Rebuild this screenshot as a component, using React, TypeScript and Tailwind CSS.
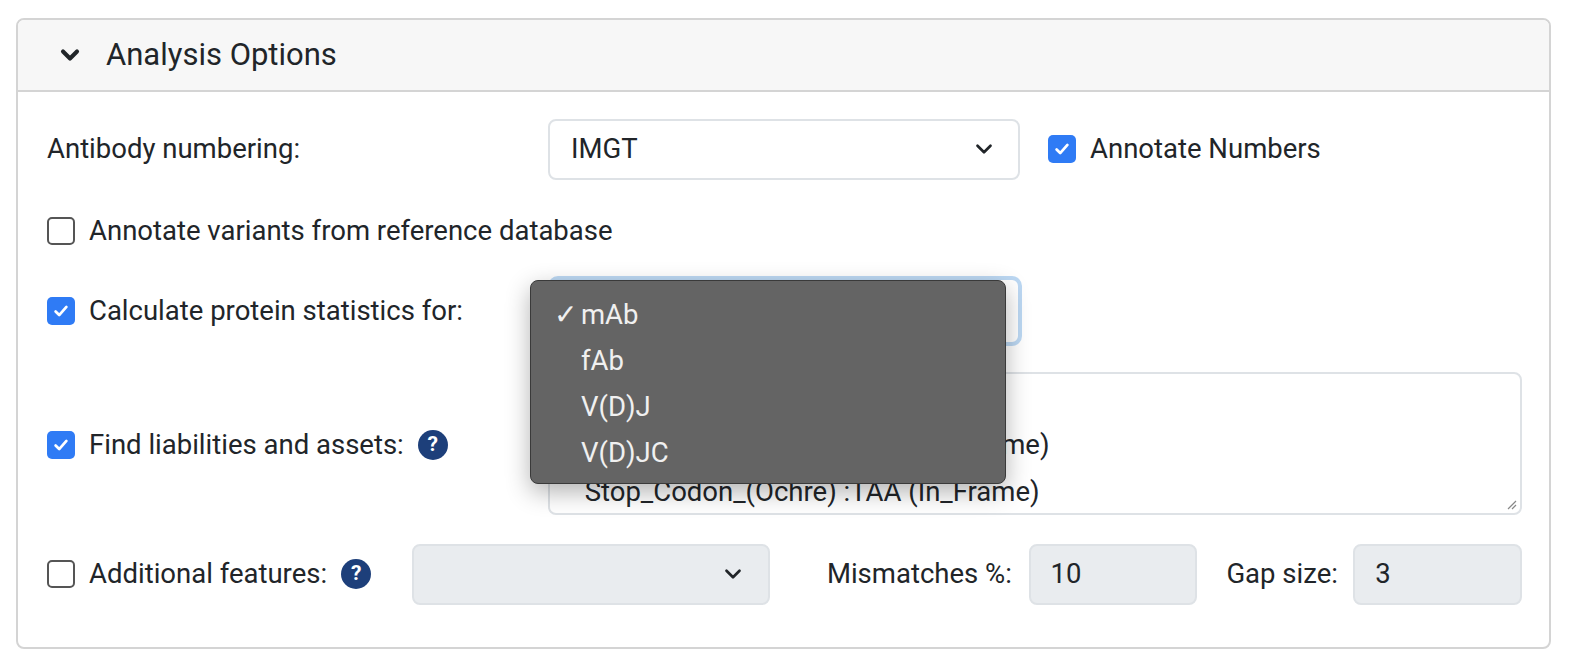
import { ChevronDown } from 'lucide-react';

const Check = ({ checked }: { checked: boolean }) =>
  checked ? (
    <span className="w-[28px] h-[28px] rounded-[5px] bg-[#2f7bf5] flex items-center justify-center shrink-0">
      <svg width="18" height="18" viewBox="0 0 20 20">
        <path d="M4 10.5l4 4 8-9" fill="none" stroke="white" strokeWidth="3" strokeLinecap="round" strokeLinejoin="round" />
      </svg>
    </span>
  ) : (
    <span className="w-[28px] h-[28px] rounded-[5px] border-2 border-[#555] bg-white shrink-0" />
  );

const Help = () => (
  <span className="w-[30px] h-[30px] rounded-full bg-[#1d3f7a] text-white text-[21px] font-bold flex items-center justify-center shrink-0">?</span>
);

export default function App() {
  return (
    <div className="w-[1572px] h-[668px] bg-white pt-[18px] pl-[16px] text-[#212529] text-[27.5px]" style={{ fontFamily: 'Roboto, "Liberation Sans", sans-serif' }}>
      <div className="w-[1535px] h-[631px] border-2 border-[#d4d4d4] rounded-[8px] overflow-hidden">
        <div className="h-[72px] bg-[#f7f7f7] border-b-2 border-[#d4d4d4] flex items-center pl-[38px] gap-[22px]">
          <ChevronDown size={28} strokeWidth={3.5} />
          <span className="text-[31px]">Analysis Options</span>
        </div>
        <div className="relative pl-[29px] pr-[27px]">
          {/* row 1 */}
          <div className="h-[114px] flex items-center">
            <span className="w-[501px]">Antibody numbering:</span>
            <div className="w-[472px] h-[61px] border-2 border-[#dee2e6] rounded-[8px] flex items-center justify-between px-[21px]">
              <span>IMGT</span>
              <ChevronDown size={26} strokeWidth={2.5} />
            </div>
            <span className="ml-[28px] mr-[14px]"><Check checked /></span>
            <span>Annotate Numbers</span>
          </div>
          {/* row 2 */}
          <div className="h-[50px] flex items-center gap-[14px]">
            <Check checked={false} />
            <span>Annotate variants from reference database</span>
          </div>
          {/* row 3 */}
          <div className="h-[110px] flex items-center">
            <span className="w-[501px] flex items-center gap-[14px]"><Check checked /><span>Calculate protein statistics for:</span></span>
            <div className="w-[474px] h-[70px] rounded-[10px] border-[4px] border-[#bcd8f3] bg-white" />
          </div>
          {/* row 4 */}
          <div className="h-[155px] flex items-start pt-[6px]">
            <span className="w-[501px] flex items-center gap-[14px] mt-[52px]"><Check checked /><span>Find liabilities and assets:</span><Help /></span>
            <div className="w-[975px] h-[143px] border-2 border-[#dee2e6] rounded-[8px] pl-[35px] pt-[0px] leading-[47px] relative">
              <div>N_Glycosylation</div>
              <div>Stop_Codon_(Amber) :TAG (In_Frame)</div>
              <div className="h-[40px] overflow-hidden">Stop_Codon_(Ochre) :TAA (In_Frame)</div>
              <svg className="absolute right-[3px] bottom-[3px]" width="12" height="12" viewBox="0 0 12 12">
                <path d="M11 3L3 11M11 7L7 11" stroke="#888" strokeWidth="1.2" />
              </svg>
            </div>
          </div>
          {/* row 5 */}
          <div className="h-[106px] flex items-center">
            <span className="w-[366px] flex items-center gap-[14px]"><Check checked={false} /><span>Additional features:</span><Help /></span>
            <div className="w-[358px] h-[61px] border-2 border-[#dee2e6] bg-[#e9ecef] rounded-[8px] flex items-center justify-end px-[22px]">
              <ChevronDown size={26} strokeWidth={2.5} />
            </div>
            <span className="ml-[57px] w-[202px]">Mismatches %:</span>
            <div className="w-[169px] h-[61px] border-2 border-[#dee2e6] bg-[#e9ecef] rounded-[8px] flex items-center px-[20px]">10</div>
            <span className="ml-[29px] w-[127px]">Gap size:</span>
            <div className="w-[169px] h-[61px] border-2 border-[#dee2e6] bg-[#e9ecef] rounded-[8px] flex items-center px-[20px]">3</div>
          </div>
          {/* dropdown menu */}
          <div className="absolute left-[512px] top-[188px] w-[476px] h-[204px] bg-[#646464] border border-[#3a3a3a] rounded-[8px] shadow-[0_8px_24px_rgba(0,0,0,0.3)] text-[#f0f0f0] pt-[11px] leading-[46px]">
            <div className="flex"><span className="w-[50px] text-right pr-[4px]">✓</span>mAb</div>
            <div className="pl-[50px]">fAb</div>
            <div className="pl-[50px]">V(D)J</div>
            <div className="pl-[50px]">V(D)JC</div>
          </div>
        </div>
      </div>
    </div>
  );
}
